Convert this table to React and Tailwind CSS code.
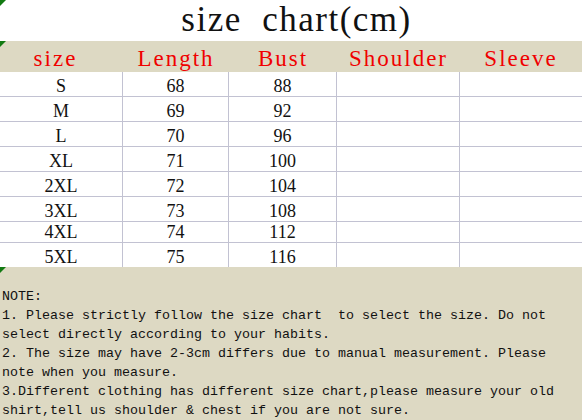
import React from "react";

const rows = [
  { s: "S", l: "68", b: "88", h: "h-[25px]" },
  { s: "M", l: "69", b: "92", h: "h-[25px]" },
  { s: "L", l: "70", b: "96", h: "h-[25px]" },
  { s: "XL", l: "71", b: "100", h: "h-[25px]" },
  { s: "2XL", l: "72", b: "104", h: "h-[25px]" },
  { s: "3XL", l: "73", b: "108", h: "h-[25px]" },
  { s: "4XL", l: "74", b: "112", h: "h-[21px]" },
  { s: "5XL", l: "75", b: "116", h: "h-[24px]" },
];

function Tri() {
  return (
    <svg className="absolute left-0 top-0" width="6" height="6" viewBox="0 0 6 6">
      <polygon points="0,0 6,0 0,6" fill="#127a12" />
    </svg>
  );
}

const cols = "grid grid-cols-[123px_106px_108px_123px_122px]";

export default function App() {
  const notes = [
    "NOTE:",
    "1. Please strictly follow the size chart  to select the size. Do not",
    "select directly according to your habits.",
    "2. The size may have 2-3cm differs due to manual measurement. Please",
    "note when you measure.",
    "3.Different clothing has different size chart,please measure your old",
    "shirt,tell us shoulder & chest if you are not sure.",
  ];
  return (
    <div className="w-[582px] h-[420px] overflow-hidden bg-white text-black">
      <div className="relative h-[41px] flex items-end justify-center pl-[11px] pb-[2px]">
        <Tri />
        <span className="font-['Liberation_Serif',serif] text-[35px] leading-[38px] tracking-[1.5px] whitespace-pre text-[#111]">
          size  chart(cm)
        </span>
      </div>
      <div className={`relative h-[31px] bg-[#ddd9c3] ${cols} font-['Liberation_Serif',serif] text-[23px] leading-none tracking-[2px] text-[#f00000]`}>
        <Tri />
        <div className="flex items-end justify-center pb-[2px] pr-[12px]">size</div>
        <div className="flex items-end justify-center pb-[2px]">Length</div>
        <div className="flex items-end justify-center pb-[2px]">Bust</div>
        <div className="flex items-end justify-center pb-[2px]">Shoulder</div>
        <div className="flex items-end justify-center pb-[2px]">Sleeve</div>
      </div>
      <div className="font-['Liberation_Serif',serif] text-[18px] leading-none text-[#111]">
        {rows.map((r, i) => (
          <div
            key={r.s}
            className={`${cols} ${r.h} ${i < rows.length - 1 ? "border-b border-[#c2c2d2]" : ""}`}
          >
            <div className="flex items-end justify-center pb-[1px] border-r border-[#c2c2d2]">{r.s}</div>
            <div className="flex items-end justify-center pb-[1px] border-r border-[#c2c2d2]">{r.l}</div>
            <div className="flex items-end justify-center pb-[1px] border-r border-[#c2c2d2]">{r.b}</div>
            <div className="border-r border-[#c2c2d2]"></div>
            <div></div>
          </div>
        ))}
      </div>
      <div className="relative h-[153px] bg-[#ddd9c3] pt-[20px] pl-[2px] font-['Liberation_Mono',monospace] text-[13.333px] leading-[19px] text-[#111]">
        <Tri />
        {notes.map((n, i) => (
          <div key={i} className="whitespace-pre">{n}</div>
        ))}
      </div>
    </div>
  );
}
